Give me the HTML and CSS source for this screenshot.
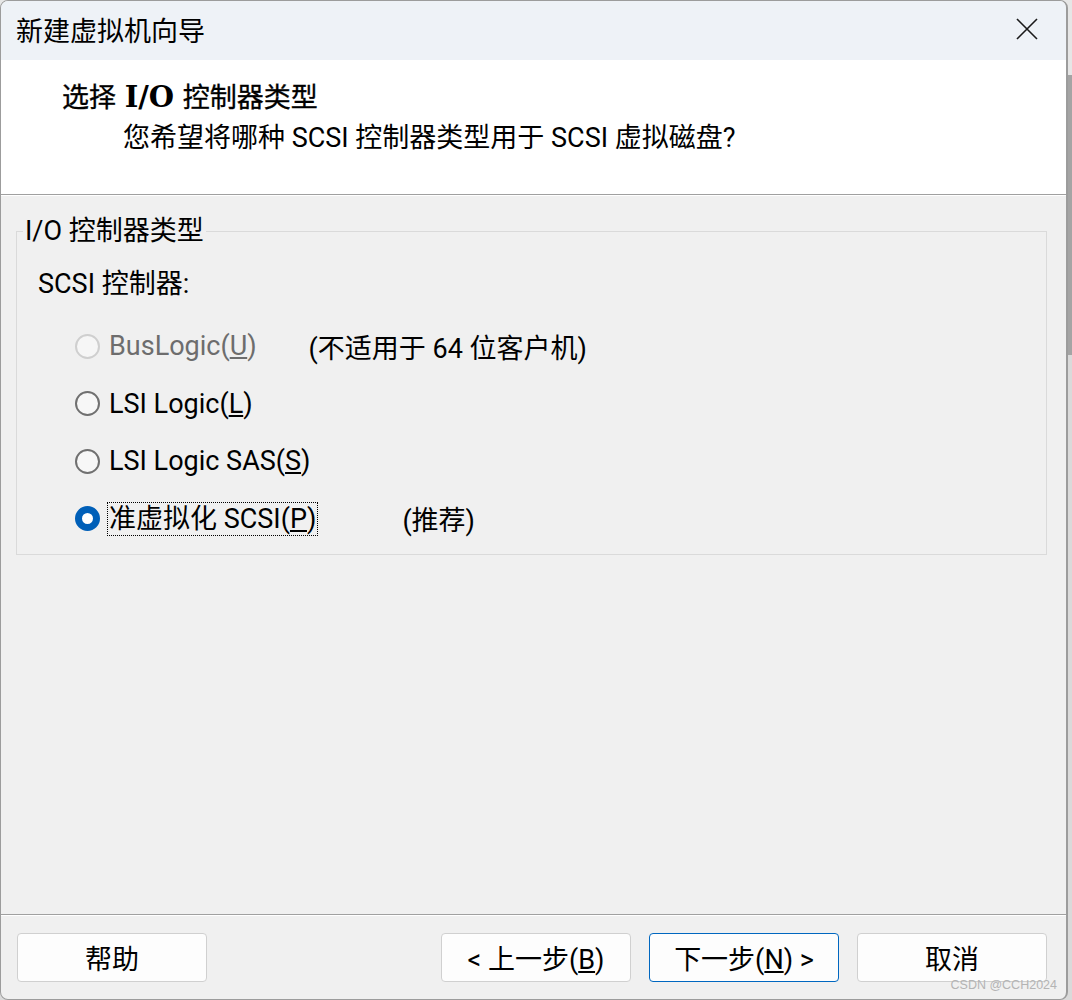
FILE: index.html
```html
<!DOCTYPE html>
<html>
<head>
	<meta charset="utf-8">
	<title>新建虚拟机向导</title>
	<link rel="stylesheet" href="styles.css">
</head>
<body>
	<div class="window">
		<div class="titlebar">
			<span class="caption">新建虚拟机向导</span>
			<svg class="close" width="22" height="22" viewBox="0 0 22 22"><path d="M1 1L21 21M21 1L1 21" stroke="#1a1a1a" stroke-width="1.6" fill="none"/></svg>
		</div>

		<div class="header">
			<div class="head_title">选择 <b>I/O</b> 控制器类型</div>
			<div class="head_sub">您希望将哪种 SCSI 控制器类型用于 SCSI 虚拟磁盘?</div>
		</div>

		<div class="content">
			<fieldset class="group">
				<legend>I/O 控制器类型</legend>
				<div class="group_label">SCSI 控制器:</div>
				<div class="options">
					<div class="option disabled">
						<span class="radio"></span>
						<span class="label">BusLogic(<u>U</u>)</span>
						<span class="note note_a">(不适用于 64 位客户机)</span>
					</div>
					<div class="option">
						<span class="radio"></span>
						<span class="label">LSI Logic(<u>L</u>)</span>
					</div>
					<div class="option">
						<span class="radio"></span>
						<span class="label">LSI Logic SAS(<u>S</u>)</span>
					</div>
					<div class="option">
						<span class="radio checked"></span>
						<span class="label focus">准虚拟化 SCSI(<u>P</u>)</span>
						<span class="note note_b">(推荐)</span>
					</div>
				</div>
			</fieldset>
		</div>

		<div class="footer">
			<button type="button" class="btn">帮助</button>
			<div class="btn_group">
				<button type="button" class="btn">&lt; 上一步(<u>B</u>)</button>
				<button type="button" class="btn primary">下一步(<u>N</u>) &gt;</button>
				<button type="button" class="btn">取消</button>
			</div>
			<span class="mark">CSDN @CCH2024</span>
		</div>
	</div>
</body>
</html>
```
FILE: styles.css
```css
html,body,div,fieldset,legend{margin:0;padding:0;}
body{
	width:1072px;height:1000px;overflow:hidden;
	background:linear-gradient(#e6e6e6 0,#e6e6e6 75px,#a4a4a4 75px,#a4a4a4 355px,#dadada 355px);
	font-family:"Segoe UI",Roboto,"Noto Sans CJK SC",sans-serif;
	font-size:27px;color:#000;
}
.window{
	box-sizing:border-box;width:1068px;height:1000px;
	border:1px solid #9c9c9c;border-right-width:2px;border-radius:8px;
	background:#f0f0f0;overflow:hidden;
	display:flex;flex-direction:column;
}
.titlebar{
	height:59px;flex:none;background:#eef2f7;
	display:flex;align-items:center;justify-content:space-between;
	padding:0 28px 0 15px;
}
.caption{line-height:34px;margin-top:2px;}
.close{display:block;margin-top:-3px;}

.header{
	height:135px;flex:none;box-sizing:border-box;background:#fff;
	border-bottom:1px solid #a0a0a0;box-shadow:0 1px 0 #fff;
	padding-top:20px;
}
.head_title{padding-left:61px;line-height:34px;-webkit-text-stroke:0.35px #000;word-spacing:2px;}
.head_title b{font-family:"DejaVu Serif",serif;font-weight:bold;font-size:29px;-webkit-text-stroke:0;}
.head_sub{padding-left:122px;line-height:34px;margin-top:6px;}

.content{flex:1;padding:19px 19px 0 15px;}
.group{
	border:1px solid #dadada;padding:0 0 18px 6px;margin:0;
}
.group legend{padding:0 2px;line-height:34px;}
.group_label{line-height:34px;margin:19px 0 0 15px;}
.options{display:flex;flex-direction:column;gap:23.5px;margin-top:28px;}
.option{display:flex;align-items:center;height:34px;padding-left:52px;}
.radio{
	box-sizing:border-box;width:25px;height:25px;border-radius:50%;
	border:2px solid #707070;background:#f7f7f7;flex:none;
}
.radio.checked{border:7.5px solid #005fb8;background:#fff;}
.disabled .radio{border-color:#cfcfcf;background:#f6f6f6;}
.disabled{color:#6d6d6d;}
.label{margin-left:7px;padding:0 1px;line-height:32px;border:1px dotted transparent;}
.label.focus{border-color:#000;}
.note{color:#000;}
.note_a{margin-left:50px;}
.note_b{margin-left:84px;}

.footer{
	flex:none;position:relative;display:flex;justify-content:space-between;
	border-top:1px solid #a0a0a0;box-shadow:inset 0 1px 0 #fff;
	padding:18px 19px 17px 16px;
}
.btn_group{display:flex;gap:18px;}
.btn{
	box-sizing:border-box;width:190px;height:49px;
	border:1px solid #d0d0d0;border-radius:4px;background:#fdfdfd;
	font-family:inherit;font-size:27px;color:#000;padding:0;
}
.btn.primary{border-color:#0067c0;}
.mark{
	position:absolute;right:9px;bottom:7px;
	font-family:"Liberation Sans",sans-serif;font-size:12.5px;color:#b4b4b4;
}
```
